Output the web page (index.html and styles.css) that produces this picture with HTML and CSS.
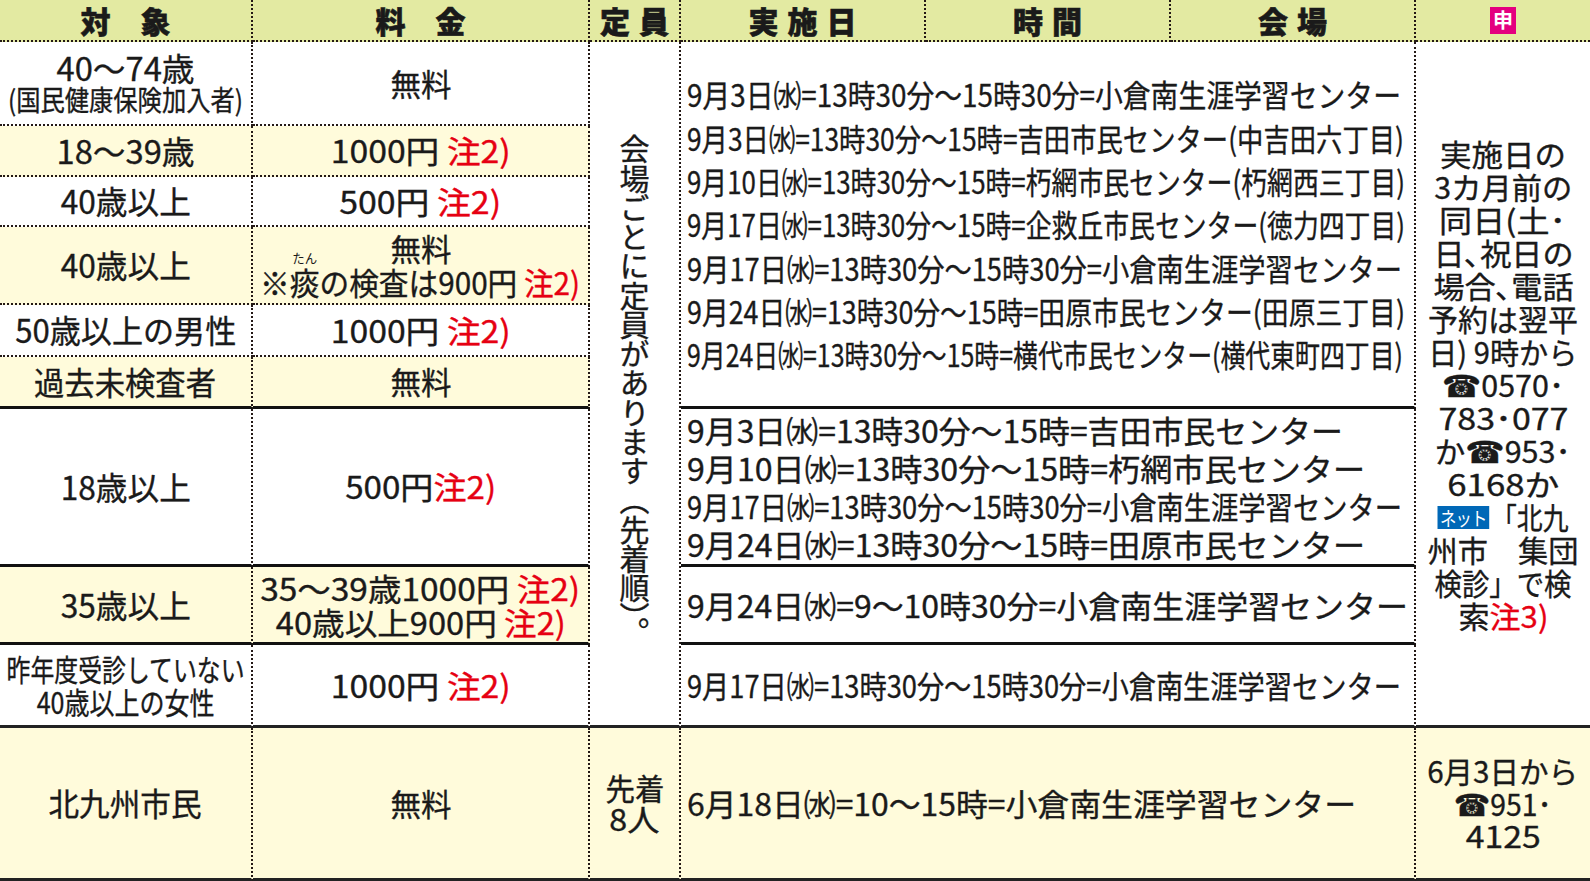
FILE: index.html
```html
<!DOCTYPE html>
<html lang="ja">
<head>
<meta charset="utf-8">
<title>検診日程</title>
<link rel="stylesheet" href="styles.css">
</head>
<body>
<div class="tbl">
  <!-- header -->
  <div class="cell hd"><span class="hsp">対　象</span></div>
  <div class="cell hd"><span class="hsp">料　金</span></div>
  <div class="cell hd"><span class="hsp wide">定員</span></div>
  <div class="cell hd"><span class="hsp wide">実施日</span></div>
  <div class="cell hd"><span class="hsp wide">時間</span></div>
  <div class="cell hd"><span class="hsp wide">会場</span></div>
  <div class="cell hd last"><span class="moushi">申</span></div>

  <!-- row 1 -->
  <div class="cell bd lh32">
    <div class="fit t32" data-w="138">40～74歳</div>
    <div class="fit t28" data-w="235">(国民健康保険加入者)</div>
  </div>
  <div class="cell bd"><div class="fit t31" data-w="61">無料</div></div>
  <div class="cell tall9 bs3 vcell"><div class="vert" data-h="512">会場ごとに定員があります（先着順）。</div></div>
  <div class="cell span3 tall6 bs grp grpA">
    <div class="fit" data-w="714">9月3日㈬=13時30分～15時30分=小倉南生涯学習センター</div>
    <div class="fit" data-w="717">9月3日㈬=13時30分～15時=吉田市民センター(中吉田六丁目)</div>
    <div class="fit" data-w="718">9月10日㈬=13時30分～15時=朽網市民センター(朽網西三丁目)</div>
    <div class="fit" data-w="718">9月17日㈬=13時30分～15時=企救丘市民センター(徳力四丁目)</div>
    <div class="fit" data-w="715">9月17日㈬=13時30分～15時30分=小倉南生涯学習センター</div>
    <div class="fit" data-w="718">9月24日㈬=13時30分～15時=田原市民センター(田原三丁目)</div>
    <div class="fit" data-w="716">9月24日㈬=13時30分～15時=横代市民センター(横代東町四丁目)</div>
  </div>
  <div class="cell tall9 bs3 last side">
    <div class="fit" data-w="126">実施日の</div>
    <div class="fit" data-w="138">3カ月前の</div>
    <div class="fit" data-w="127">同日(土･</div>
    <div class="fit" data-w="140">日､祝日の</div>
    <div class="fit" data-w="140">場合､電話</div>
    <div class="fit" data-w="150">予約は翌平</div>
    <div class="fit" data-w="149">日) 9時から</div>
    <div class="fit" data-w="122"><span class="tel">☎</span>0570･</div>
    <div class="fit" data-w="130">783･077</div>
    <div class="fit" data-w="136">か<span class="tel">☎</span>953･</div>
    <div class="fit" data-w="112">6168か</div>
    <div class="fit" data-w="131"><span class="net">ネット</span>「北九</div>
    <div class="fit" data-w="151">州市　集団</div>
    <div class="fit" data-w="137">検診」で検</div>
    <div class="fit" data-w="90">索<span class="red">注3)</span></div>
  </div>

  <!-- row 2 -->
  <div class="cell bd cream"><div class="fit t32" data-w="138">18～39歳</div></div>
  <div class="cell bd cream"><div class="fit t31" data-w="180">1000円 <span class="red">注2)</span></div></div>

  <!-- row 3 -->
  <div class="cell bd"><div class="fit t32" data-w="130">40歳以上</div></div>
  <div class="cell bd"><div class="fit t31" data-w="162">500円 <span class="red">注2)</span></div></div>

  <!-- row 4 -->
  <div class="cell bd cream"><div class="fit t32" data-w="130">40歳以上</div></div>
  <div class="cell bd cream lh34">
    <div class="fit t31" data-w="61">無料</div>
    <div class="fit t31" data-w="320">※<span class="rubyw">痰<span class="rt">たん</span></span>の検査は900円 <span class="red">注2)</span></div>
  </div>

  <!-- row 5 -->
  <div class="cell bd"><div class="fit t32" data-w="221">50歳以上の男性</div></div>
  <div class="cell bd"><div class="fit t31" data-w="180">1000円 <span class="red">注2)</span></div></div>

  <!-- row 6 -->
  <div class="cell bs cream"><div class="fit t32" data-w="182">過去未検査者</div></div>
  <div class="cell bs cream"><div class="fit t31" data-w="61">無料</div></div>

  <!-- row 7 -->
  <div class="cell bs"><div class="fit t32" data-w="130">18歳以上</div></div>
  <div class="cell bs"><div class="fit t31" data-w="151">500円<span class="red">注2)</span></div></div>
  <div class="cell span3 bs grp grpB">
    <div class="fit" data-w="656">9月3日㈬=13時30分～15時=吉田市民センター</div>
    <div class="fit" data-w="678">9月10日㈬=13時30分～15時=朽網市民センター</div>
    <div class="fit" data-w="715">9月17日㈬=13時30分～15時30分=小倉南生涯学習センター</div>
    <div class="fit" data-w="678">9月24日㈬=13時30分～15時=田原市民センター</div>
  </div>

  <!-- row 8 -->
  <div class="cell bs cream"><div class="fit t32" data-w="130">35歳以上</div></div>
  <div class="cell bs cream lh34">
    <div class="fit t31" data-w="320">35～39歳1000円 <span class="red">注2)</span></div>
    <div class="fit t31" data-w="290">40歳以上900円 <span class="red">注2)</span></div>
  </div>
  <div class="cell span3 bs grp">
    <div class="fit" data-w="721">9月24日㈬=9～10時30分=小倉南生涯学習センター</div>
  </div>

  <!-- row 9 -->
  <div class="cell bs3 lh33">
    <div class="fit t30" data-w="238">昨年度受診していない</div>
    <div class="fit t30" data-w="178">40歳以上の女性</div>
  </div>
  <div class="cell bs3"><div class="fit t31" data-w="180">1000円 <span class="red">注2)</span></div></div>
  <div class="cell span3 bs3 grp">
    <div class="fit" data-w="714">9月17日㈬=13時30分～15時30分=小倉南生涯学習センター</div>
  </div>

  <!-- row 10 -->
  <div class="cell bs3 cream"><div class="fit t32" data-w="153">北九州市民</div></div>
  <div class="cell bs3 cream"><div class="fit t31" data-w="61">無料</div></div>
  <div class="cell bs3 cream lh31">
    <div class="fit t30" data-w="59">先着</div>
    <div class="fit t30" data-w="50">8人</div>
  </div>
  <div class="cell span3 bs3 cream grp">
    <div class="fit" data-w="669">6月18日㈬=10～15時=小倉南生涯学習センター</div>
  </div>
  <div class="cell bs3 cream last side lh32">
    <div class="fit" data-w="151">6月3日から</div>
    <div class="fit" data-w="98"><span class="tel">☎</span>951･</div>
    <div class="fit" data-w="75">4125</div>
  </div>
</div>
<script src="script.js"></script>
</body>
</html>
```

FILE: styles.css
```css
* { box-sizing: border-box; margin: 0; padding: 0; }
html, body { width: 1590px; height: 881px; overflow: hidden; background: #fff; }
body {
  font-family: "Noto Sans CJK JP", "Noto Sans", sans-serif;
  font-weight: 400;
  color: #1a1a1a;
  -webkit-text-stroke: 0.35px currentColor;
}
.tbl {
  display: grid;
  grid-template-columns: 253px 337px 91px 245px 245px 245px 174px;
  grid-template-rows: 42px 84px 51px 50px 78px 52px 52px 158px 78px 83px 153px;
  width: 1590px;
  height: 881px;
}
.cell {
  display: flex;
  flex-direction: column;
  align-items: center;
  justify-content: center;
  border-right: 2px dotted #231815;
  white-space: nowrap;
  min-width: 0;
  background: #fff;
}
.last { border-right: none; }
.hd {
  background: #e3eaa2;
  border-bottom: 2px dotted #231815;
  font-weight: 900;
  font-size: 30px;
  line-height: 40px;
  -webkit-text-stroke: 0.6px currentColor;
}
.hsp { display: inline-block; }
.wide { letter-spacing: 9px; padding-left: 9px; }
.moushi {
  display: inline-flex;
  align-items: center;
  justify-content: center;
  width: 26px;
  height: 27px;
  background: #e4007f;
  color: #fff;
  font-size: 20px;
  font-weight: 700;
  line-height: 1;
  -webkit-text-stroke: 0;
}
.bd { border-bottom: 2px dotted #231815; }
.bs { border-bottom: 3px solid #111; }
.bs3 { border-bottom: 3px solid #222; }
.cream { background: #fffbdb; }
.span3 { grid-column: span 3; }
.tall6 { grid-row: span 6; }
.tall9 { grid-row: span 9; }

.fit { display: inline-block; white-space: nowrap; transform-origin: center center; }
.t32 { font-size: 32px; }
.t31 { font-size: 31px; }
.t30 { font-size: 30px; }
.t28 { font-size: 28px; }
.cell > .fit { line-height: 1.1; }
.lh31 > .fit { line-height: 31px; }
.lh32 > .fit { line-height: 32px; }
.lh33 > .fit { line-height: 33px; }
.lh34 > .fit { line-height: 34px; }

.red { color: #e60012; }

.rubyw { position: relative; display: inline-block; }
.rt {
  position: absolute;
  left: 50%;
  top: -14px;
  transform: translateX(-50%);
  font-size: 13px;
  line-height: 13px;
  white-space: nowrap;
  -webkit-text-stroke: 0;
}

.vcell { justify-content: center; }
.vert {
  writing-mode: vertical-rl;
  font-size: 30px;
  line-height: 32px;
  white-space: nowrap;
  transform-origin: center center;
  margin-top: 14px;
}

.grp {
  align-items: flex-start;
  padding-left: 6px;
  font-size: 31px;
}
.grp > .fit { transform-origin: left center; line-height: 40px; }
.grpA > .fit { line-height: 43.3px; }
.grpB > .fit { line-height: 38px; }

.side { font-size: 30px; }
.side > .fit { line-height: 33px; }
.side.lh32 > .fit { line-height: 32.5px; }
.side > .fit:first-child { margin-top: 1px; }
.side.lh32 > .fit:first-child { margin-top: 0; }

.tel {
  font-family: "DejaVu Sans", sans-serif;
  font-size: 31px;
  font-weight: 700;
  line-height: 0;
}
.net {
  display: inline-block;
  background: #0068b7;
  color: #fff;
  font-size: 19px;
  line-height: 23px;
  height: 23px;
  padding: 0 3px;
  vertical-align: 3px;
  margin-right: 2px;
  letter-spacing: -1px;
  -webkit-text-stroke: 0;
}
```

FILE: script.js
```js
function fitAll() {
  document.querySelectorAll('[data-w]').forEach(function (el) {
    el.style.transform = 'none';
    var w = el.getBoundingClientRect().width;
    var t = parseFloat(el.getAttribute('data-w'));
    if (w > 0) el.style.transform = 'scaleX(' + (t / w).toFixed(4) + ')';
  });
  document.querySelectorAll('[data-h]').forEach(function (el) {
    el.style.transform = 'none';
    var h = el.getBoundingClientRect().height;
    var t = parseFloat(el.getAttribute('data-h'));
    if (h > 0) el.style.transform = 'scaleY(' + (t / h).toFixed(4) + ')';
  });
}
fitAll();
if (document.fonts && document.fonts.ready) {
  document.fonts.ready.then(fitAll);
}
```
